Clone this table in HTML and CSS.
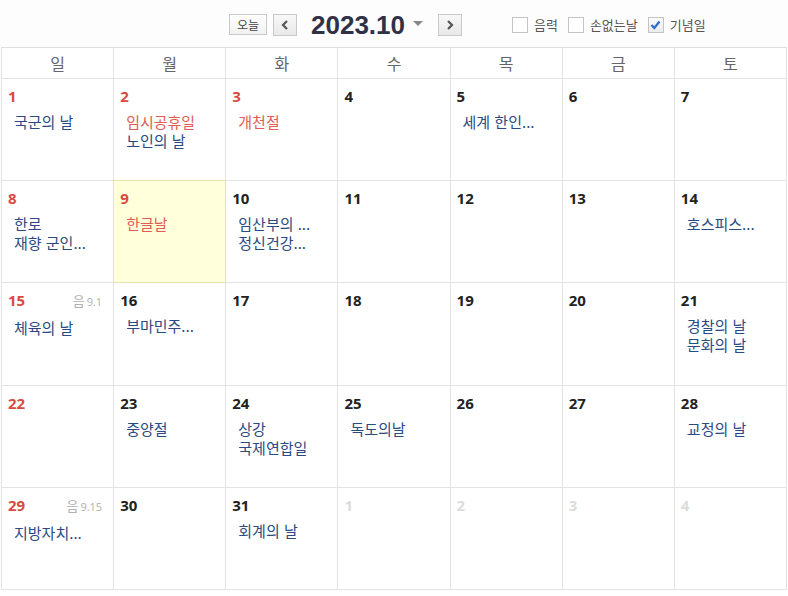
FILE: index.html
```html
<!DOCTYPE html>
<html lang="ko">
<head>
<meta charset="utf-8">
<link rel="stylesheet" href="styles.css">
</head>
<body>
<div class="toolbar">
  <button class="btn today-btn">오늘</button>
  <button class="btn nav-btn"><svg width="8" height="10" viewBox="0 0 8 10"><path d="M6 1 L2 5 L6 9" fill="none" stroke="#555" stroke-width="2.2"/></svg></button>
  <div class="title">2023.10</div>
  <span class="caret"></span>
  <button class="btn nav-btn"><svg width="8" height="10" viewBox="0 0 8 10"><path d="M2 1 L6 5 L2 9" fill="none" stroke="#555" stroke-width="2.2"/></svg></button>
  <div class="checks">
    <label class="chk"><span class="box"></span>음력</label>
    <label class="chk"><span class="box"></span>손없는날</label>
    <label class="chk"><span class="box checked"><svg width="11" height="10" viewBox="0 0 11 10"><path d="M1.5 5 L4.3 8 L9.5 1.5" fill="none" stroke="#2f6bc8" stroke-width="2.2"/></svg></span>기념일</label>
  </div>
</div>
<div class="cal">
  <div class="wd">일</div><div class="wd">월</div><div class="wd">화</div><div class="wd">수</div><div class="wd">목</div><div class="wd">금</div><div class="wd">토</div>

  <div class="cell"><div class="dn red">1</div><div class="ev">국군의 날</div></div>
  <div class="cell"><div class="dn red">2</div><div class="ev hol">임시공휴일</div><div class="ev">노인의 날</div></div>
  <div class="cell"><div class="dn red">3</div><div class="ev hol">개천절</div></div>
  <div class="cell"><div class="dn">4</div></div>
  <div class="cell"><div class="dn">5</div><div class="ev">세계 한인...</div></div>
  <div class="cell"><div class="dn">6</div></div>
  <div class="cell"><div class="dn">7</div></div>

  <div class="cell"><div class="dn red">8</div><div class="ev">한로</div><div class="ev">재향 군인...</div></div>
  <div class="cell today"><div class="dn red">9</div><div class="ev hol">한글날</div></div>
  <div class="cell"><div class="dn">10</div><div class="ev">임산부의 ...</div><div class="ev">정신건강...</div></div>
  <div class="cell"><div class="dn">11</div></div>
  <div class="cell"><div class="dn">12</div></div>
  <div class="cell"><div class="dn">13</div></div>
  <div class="cell"><div class="dn">14</div><div class="ev">호스피스...</div></div>

  <div class="cell"><div class="dn red">15<span class="lunar">음<small>9.1</small></span></div><div class="ev">체육의 날</div></div>
  <div class="cell"><div class="dn">16</div><div class="ev">부마민주...</div></div>
  <div class="cell"><div class="dn">17</div></div>
  <div class="cell"><div class="dn">18</div></div>
  <div class="cell"><div class="dn">19</div></div>
  <div class="cell"><div class="dn">20</div></div>
  <div class="cell"><div class="dn">21</div><div class="ev">경찰의 날</div><div class="ev">문화의 날</div></div>

  <div class="cell"><div class="dn red">22</div></div>
  <div class="cell"><div class="dn">23</div><div class="ev">중양절</div></div>
  <div class="cell"><div class="dn">24</div><div class="ev">상강</div><div class="ev">국제연합일</div></div>
  <div class="cell"><div class="dn">25</div><div class="ev">독도의날</div></div>
  <div class="cell"><div class="dn">26</div></div>
  <div class="cell"><div class="dn">27</div></div>
  <div class="cell"><div class="dn">28</div><div class="ev">교정의 날</div></div>

  <div class="cell"><div class="dn red">29<span class="lunar">음<small>9.15</small></span></div><div class="ev">지방자치...</div></div>
  <div class="cell"><div class="dn">30</div></div>
  <div class="cell"><div class="dn">31</div><div class="ev">회계의 날</div></div>
  <div class="cell"><div class="dn other">1</div></div>
  <div class="cell"><div class="dn other">2</div></div>
  <div class="cell"><div class="dn other">3</div></div>
  <div class="cell"><div class="dn other">4</div></div>
</div>
</body>
</html>
```

FILE: styles.css
```css
html, body {
  margin: 0;
  padding: 0;
  background: #fff;
  font-family: "Open Sans", "Noto Sans CJK KR", sans-serif;
}

.toolbar {
  height: 47px;
  display: flex;
  align-items: center;
  padding-left: 229px;
  padding-top: 2px;
  box-sizing: border-box;
  background: #fdfdfd;
}

.btn {
  margin: 0;
  padding: 0;
  border: 1px solid #c9c9c9;
  background: linear-gradient(#ffffff, #f1f1f1);
  display: flex;
  align-items: center;
  justify-content: center;
  box-sizing: border-box;
}

.today-btn {
  width: 38px;
  height: 21px;
  font-family: "Noto Sans CJK KR", sans-serif;
  font-size: 12px;
  color: #444;
  line-height: 1;
}

.nav-btn {
  width: 24px;
  height: 22px;
  margin-left: 6px;
  background: linear-gradient(#f8f8f8, #e9e9e9);
}

.title {
  margin-left: 14px;
  font-family: "Liberation Sans", Arial, sans-serif;
  font-weight: bold;
  font-size: 26px;
  color: #2f3247;
  line-height: 30px;
}

.caret {
  margin-left: 8px;
  margin-right: 9px;
  width: 0;
  height: 0;
  border-left: 5px solid transparent;
  border-right: 5px solid transparent;
  border-top: 5px solid #888;
  margin-top: -2px;
}

.checks {
  display: flex;
  align-items: center;
  margin-left: 50px;
}

.chk {
  display: flex;
  align-items: center;
  font-family: "Noto Sans CJK KR", sans-serif;
  font-size: 13px;
  color: #555;
  margin-right: 10px;
  line-height: 16px;
}

.box {
  width: 16px;
  height: 16px;
  border: 1px solid #c4c4c4;
  background: #fff;
  box-sizing: border-box;
  margin-right: 6px;
  display: flex;
  align-items: center;
  justify-content: center;
}

.box.checked {
  background: linear-gradient(#fafafa, #ececec);
}

.cal {
  margin-left: 1px;
  width: 786px;
  height: 543px;
  display: grid;
  grid-template-columns: repeat(7, 1fr);
  grid-template-rows: 31px repeat(5, 1fr);
  border-top: 1px solid #dedede;
  border-left: 1px solid #e3e3e3;
  box-sizing: border-box;
}

.wd, .cell {
  border-right: 1px solid #e3e3e3;
  border-bottom: 1px solid #e3e3e3;
}

.wd {
  display: flex;
  align-items: center;
  justify-content: center;
  font-family: "Noto Sans CJK KR", sans-serif;
  font-size: 16px;
  color: #666;
  padding-bottom: 1px;
}

.cell {
  padding: 8px 11px 0 6px;
  overflow: hidden;
  min-width: 0;
}

.today {
  background: #ffffdc;
  border-right-color: #e7e1b4;
  border-bottom-color: #e7e1b4;
  box-shadow: -1px -1px 0 #e7e1b4;
}

.dn {
  display: flex;
  justify-content: space-between;
  align-items: baseline;
  font-weight: bold;
  font-size: 15px;
  line-height: 18px;
  color: #222;
  margin-bottom: 7px;
}

.dn.red { color: #d94a43; }
.dn.other { color: #dcdcdc; }

.lunar {
  font-weight: normal;
  font-family: "Noto Sans CJK KR", sans-serif;
  font-size: 13px;
  color: #b0b0b0;
}

.lunar small {
  font-family: "Open Sans", sans-serif;
  font-size: 11px;
  margin-left: 2px;
}

.ev {
  padding-left: 6px;
  font-family: "Noto Sans CJK KR", sans-serif;
  font-size: 15px;
  line-height: 19px;
  color: #2b4a82;
  white-space: nowrap;
}

.ev.hol { color: #e05c55; }
```
